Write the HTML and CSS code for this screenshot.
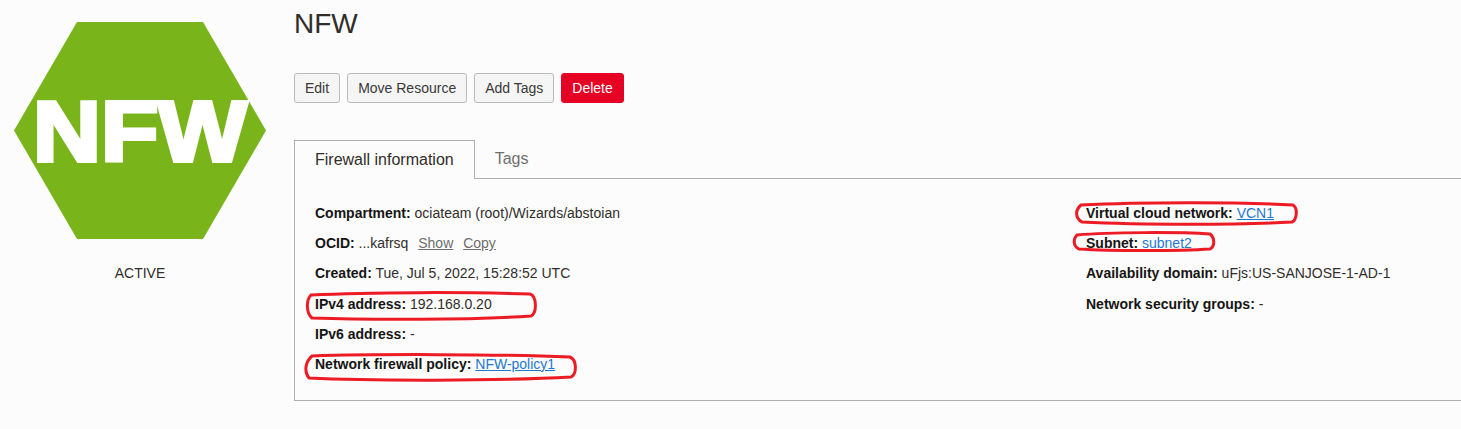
FILE: index.html
```html
<!DOCTYPE html>
<html>
	<head>
		<meta charset="utf-8">
		<title>NFW</title>
		<link rel="stylesheet" href="styles.css">
	</head>
	<body>
		<div class="page">
			<!-- left side, status badge -->
			<div class="side">
				<svg class="hexagon" width="252" height="217" viewBox="0 0 252 217">
					<polygon points="63,0 189,0 252,108.5 189,217 63,217 0,108.5" fill="#79b51a"/>
					<text x="19" y="139" textLength="214" lengthAdjust="spacingAndGlyphs" class="hexagonText">NFW</text>
				</svg>
				<div class="status">ACTIVE</div>
			</div>
			<div class="content">
				<h1>NFW</h1>
				<div class="actions">
					<button class="btn">Edit</button>
					<button class="btn">Move Resource</button>
					<button class="btn">Add Tags</button>
					<button class="btn btnDanger">Delete</button>
				</div>
				<!-- tabs -->
				<div class="tabs">
					<div class="tab tabActive">Firewall information</div>
					<div class="tab">Tags</div>
				</div>
				<div class="panel">
					<div class="column">
						<div class="row"><b>Compartment:</b> ociateam (root)/Wizards/abstoian</div>
						<div class="row"><b>OCID:</b> ...kafrsq <a class="action" href="#">Show</a> <a class="action" href="#">Copy</a></div>
						<div class="row"><b>Created:</b> Tue, Jul 5, 2022, 15:28:52 UTC</div>
						<div class="row"><b>IPv4 address:</b> 192.168.0.20</div>
						<div class="row"><b>IPv6 address:</b> -</div>
						<div class="row"><b>Network firewall policy:</b> <a href="#">NFW-policy1</a></div>
					</div>
					<div class="column columnRight">
						<div class="row"><b>Virtual cloud network:</b> <a href="#">VCN1</a></div>
						<div class="row"><b>Subnet:</b> <a href="#">subnet2</a></div>
						<div class="row"><b>Availability domain:</b> uFjs:US-SANJOSE-1-AD-1</div>
						<div class="row"><b>Network security groups:</b> -</div>
					</div>
				</div>
			</div>
		</div>
		<!-- hand drawn red marks on top of the page -->
		<svg class="marks" width="1461" height="429" viewBox="0 0 1461 429">
			<path d="M311 295 C370 292 470 292 530 294 C537 296 537 313 531 316 C470 320 370 320 312 318 C306 313 306 300 311 295 Z"/>
			<path d="M312 356 C370 354 500 354 570 357 C577 360 577 374 571 377 C500 381 370 381 309 378 C304 372 305 362 312 356 Z"/>
			<path d="M1081 205 C1140 202 1240 202 1293 205 C1298 208 1297 220 1292 222 C1240 225 1140 225 1082 222 C1075 218 1075 210 1081 205 Z"/>
			<path d="M1077 235 C1110 232 1180 232 1210 234 C1215 238 1215 246 1210 249 C1180 251 1110 251 1079 249 C1073 246 1073 239 1077 235 Z"/>
		</svg>
	</body>
</html>
```

FILE: styles.css
```css
* {
	margin: 0;
	padding: 0;
	box-sizing: border-box;
}
html, body {
	height: 100%;
	overflow: hidden;
}
body {
	background-color: #fcfcfc;
	color: #161513;
	font-family: "Liberation Sans", Arial, sans-serif;
	font-size: 14px;
	position: relative;
}
.page {
	display: flex;
}
.side {
	width: 294px;
	flex: none;
	padding: 22px 14px 0;
}
.hexagon {
	display: block;
}
.hexagonText {
	font-family: "Liberation Sans", Arial, sans-serif;
	font-size: 86px;
	font-weight: bold;
	fill: #fff;
	stroke: #fff;
	stroke-width: 4;
	stroke-linejoin: miter;
}
.status {
	width: 252px;
	margin-top: 26px;
	text-align: center;
	font-size: 14px;
	line-height: 16px;
	color: #312d2a;
}
.content {
	flex: 1;
	min-width: 0;
}
h1 {
	font-size: 28px;
	font-weight: normal;
	line-height: 32px;
	margin-top: 8px;
	color: #312d2a;
}
.actions {
	display: flex;
	gap: 7px;
	margin-top: 33px;
}
.btn {
	height: 30px;
	padding: 0 10px;
	border: 1px solid #b9bbbd;
	border-radius: 3px;
	background-color: #f5f5f5;
	color: #3a3937;
	font-family: inherit;
	font-size: 14px;
}
.btnDanger {
	border-color: #e60023;
	background-color: #e60023;
	color: #fff;
}
.tabs {
	display: flex;
	margin-top: 37px;
	border-bottom: 1px solid #aeaeae;
	height: 39px;
}
.tab {
	padding: 0 20px;
	font-size: 16px;
	line-height: 37px;
	color: #6f6e6c;
}
.tabActive {
	height: 39px;
	border: 1px solid #aeaeae;
	border-bottom: 0;
	background-color: #fcfcfc;
	color: #312d2a;
}
.panel {
	display: flex;
	height: 222px;
	padding: 19px 0 0 20px;
	border-left: 1px solid #aeaeae;
	border-bottom: 1px solid #aeaeae;
}
.column {
	width: 771px;
	flex: none;
}
.columnRight {
	width: auto;
	flex: 1;
	min-width: 0;
}
.row {
	height: 30.2px;
	line-height: 30px;
	color: #312d2a;
}
.row b {
	color: #161513;
}
a {
	color: #1f78d1;
}
a.action {
	color: #6f6e6c;
	margin-left: 6px;
}
.marks {
	position: absolute;
	left: 0;
	top: 0;
	pointer-events: none;
}
.marks path {
	fill: none;
	stroke: #ed1c24;
	stroke-width: 3;
}
```
